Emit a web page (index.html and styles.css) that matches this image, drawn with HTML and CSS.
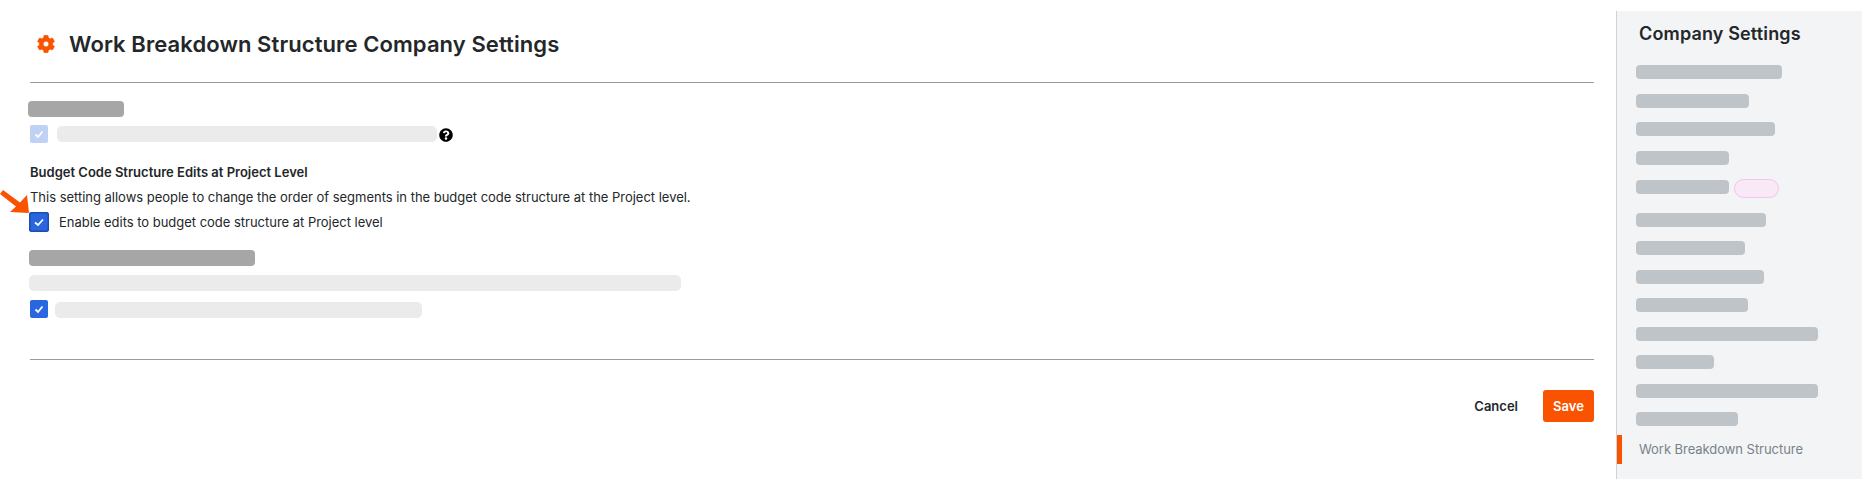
FILE: index.html
```html
<!DOCTYPE html>
<html lang="en">
<head>
    <meta charset="UTF-8">
    <meta name="viewport" content="width=device-width, initial-scale=1.0">
    <title>Work Breakdown Structure Company Settings</title>
    <link rel="stylesheet" href="styles.css">
</head>
<body>
    <main class="content">
        <header class="page-header">
            <svg class="gear-icon" viewBox="0 0 512 512"><path d="M487.4 315.7l-42.6-24.6c4.3-23.2 4.3-47 0-70.2l42.6-24.6c4.9-2.8 7.1-8.6 5.5-14-11.1-35.6-30-67.8-54.7-94.6-3.8-4.1-10-5.1-14.8-2.3L380.8 110c-17.9-15.4-38.5-27.3-60.8-35.1V25.8c0-5.6-3.9-10.5-9.4-11.7-36.7-8.2-74.3-7.8-109.2 0-5.5 1.2-9.4 6.1-9.4 11.7V75c-22.2 7.9-42.8 19.8-60.8 35.1L88.7 85.5c-4.9-2.8-11-1.9-14.8 2.3-24.7 26.7-43.6 58.9-54.7 94.6-1.7 5.4.6 11.2 5.5 14L67.3 221c-4.3 23.2-4.3 47 0 70.2l-42.6 24.6c-4.9 2.8-7.1 8.6-5.5 14 11.1 35.6 30 67.8 54.7 94.6 3.8 4.1 10 5.1 14.8 2.3l42.6-24.6c17.9 15.4 38.5 27.3 60.8 35.1v49.2c0 5.6 3.9 10.5 9.4 11.7 36.7 8.2 74.3 7.8 109.2 0 5.5-1.2 9.4-6.1 9.4-11.7v-49.2c22.2-7.9 42.8-19.8 60.8-35.1l42.6 24.6c4.9 2.8 11 1.9 14.8-2.3 24.7-26.7 43.6-58.9 54.7-94.6 1.5-5.5-.7-11.3-5.6-14.1zM256 336c-44.1 0-80-35.9-80-80s35.9-80 80-80 80 35.9 80 80-35.9 80-80 80z"/></svg>
            <h1>Work Breakdown Structure Company Settings</h1>
        </header>

        <div class="redacted-heading heading-short"></div>
        <div class="check-row check-row-first">
            <span class="checkbox checkbox-faded"><svg viewBox="0 0 18 18"><polyline points="5.5,9.5 8,12 12.5,6.5"/></svg></span>
            <div class="redacted-line line-first"></div>
            <svg class="help-icon" viewBox="0 0 512 512"><path d="M504 256c0 136.997-111.043 248-248 248S8 392.997 8 256C8 119.083 119.043 8 256 8s248 111.083 248 248zM262.655 90c-54.497 0-89.255 22.957-116.549 63.758-3.536 5.286-2.353 12.415 2.715 16.258l34.699 26.31c5.205 3.947 12.621 3.008 16.665-2.122 17.864-22.658 30.113-35.797 57.303-35.797 20.429 0 45.698 13.148 45.698 32.958 0 14.976-12.363 22.667-32.534 33.976C247.128 238.528 216 254.941 216 296v4c0 6.627 5.373 12 12 12h56c6.627 0 12-5.373 12-12v-1.333c0-28.462 83.186-29.647 83.186-106.667 0-58.002-60.165-102-116.531-102zM256 338c-25.365 0-46 20.635-46 46 0 25.364 20.635 46 46 46s46-20.636 46-46c0-25.365-20.635-46-46-46z"/></svg>
        </div>

        <h2 class="setting-title">Budget Code Structure Edits at Project Level</h2>
        <p class="setting-text">This setting allows people to change the order of segments in the budget code structure at the Project level.</p>
        <label class="check-row check-row-main">
            <span class="checkbox checkbox-main"><svg viewBox="0 0 20 20"><polyline points="6,10.5 9,13 14,7.5"/></svg></span>
            <span>Enable edits to budget code structure at Project level</span>
        </label>

        <div class="redacted-heading heading-long"></div>
        <div class="redacted-line line-wide"></div>
        <div class="check-row check-row-last">
            <span class="checkbox"><svg viewBox="0 0 18 18"><polyline points="5.5,9.5 8,12 12.5,6.5"/></svg></span>
            <div class="redacted-line line-last"></div>
        </div>

        <footer class="page-footer">
            <button class="btn-cancel" type="button">Cancel</button>
            <button class="btn-save" type="button">Save</button>
        </footer>

        <svg class="callout-arrow" viewBox="0 0 32 28"><polygon points="29,23 10,22 16,16.5 0,4 3,0 20,12.5 27,5"/></svg>
    </main>

    <aside class="sidebar">
        <h2>Company Settings</h2>
        <ul class="nav-list">
            <li class="nav-bar bar-146"></li>
            <li class="nav-bar bar-113"></li>
            <li class="nav-bar bar-139"></li>
            <li class="nav-bar bar-93"></li>
            <li class="nav-row">
                <div class="nav-bar bar-93"></div>
                <div class="nav-badge"></div>
            </li>
            <li class="nav-bar bar-130"></li>
            <li class="nav-bar bar-109"></li>
            <li class="nav-bar bar-128"></li>
            <li class="nav-bar bar-112"></li>
            <li class="nav-bar bar-182"></li>
            <li class="nav-bar bar-78"></li>
            <li class="nav-bar bar-182"></li>
            <li class="nav-bar bar-102"></li>
            <li class="nav-active">Work Breakdown Structure</li>
        </ul>
    </aside>
</body>
</html>
```

FILE: styles.css
```css
* {
    box-sizing: border-box;
}
body {
    font-family: Inter, 'Liberation Sans', sans-serif;
    background-color: #fff;
    color: #232729;
    margin: 0;
    height: 489px;
    overflow: hidden;
    display: flex;
}
h1, h2, p, ul {
    margin: 0;
    padding: 0;
}
.content {
    width: 1616px;
    padding: 30px 22px 0 30px;
    position: relative;
}
.page-header {
    display: flex;
    align-items: center;
    gap: 14px;
    height: 53px;
    padding-bottom: 24px;
    padding-left: 7px;
    border-bottom: 1px solid #9a9a9a;
}
.gear-icon {
    width: 18px;
    height: 18px;
    fill: #f95300;
    stroke: #f95300;
    stroke-width: 16;
}
h1 {
    font-size: 22px;
    line-height: 28px;
    font-weight: 600;
    letter-spacing: 0.09px;
}
.redacted-heading {
    height: 16px;
    margin-left: -1px;
    background: #a6a6a6;
    border-radius: 4px;
}
.heading-short {
    width: 96px;
    margin-top: 18px;
    margin-left: -2px;
}
.heading-long {
    width: 226px;
    margin-top: 18px;
}
.redacted-line {
    height: 16px;
    background: #ebebeb;
    border-radius: 5px;
}
.line-first {
    width: 380px;
}
.line-wide {
    width: 652px;
    margin-top: 9px;
    margin-left: -1px;
}
.line-last {
    width: 367px;
}
.check-row {
    display: flex;
    align-items: center;
}
.check-row-first {
    gap: 9px;
    margin-top: 8px;
}
.check-row-main {
    gap: 10px;
    margin-top: 5px;
    margin-left: -1px;
    font-size: 13px;
    line-height: 20px;
    letter-spacing: -0.02px;
}
.check-row-last {
    gap: 7px;
    margin-top: 9px;
    align-items: flex-end;
}
.checkbox {
    flex: none;
    width: 18px;
    height: 18px;
    background: #2a66e0;
    border-radius: 2px;
}
.checkbox svg {
    display: block;
    fill: none;
    stroke: #fff;
    stroke-width: 1.8;
}
.checkbox-faded {
    background: #bfd2f5;
}
.checkbox-main {
    width: 20px;
    height: 20px;
    border-radius: 3px;
    box-shadow: inset 0 0 0 1.5px #1d4eaa;
}
.help-icon {
    width: 14px;
    height: 14px;
    margin-left: -7px;
    margin-top: 2px;
}
.setting-title {
    margin-top: 19px;
    font-size: 13px;
    line-height: 20px;
    font-weight: 600;
}
.setting-text {
    margin-top: 5px;
    font-size: 13px;
    line-height: 20px;
    letter-spacing: -0.02px;
}
.page-footer {
    display: flex;
    justify-content: flex-end;
    align-items: center;
    gap: 25px;
    margin-top: 41px;
    padding-top: 30px;
    border-top: 1px solid #9a9a9a;
}
button {
    font-family: inherit;
    font-size: 13px;
    font-weight: 600;
    border: none;
    padding: 0;
    background: none;
    cursor: pointer;
}
.btn-cancel {
    color: #232729;
}
.btn-save {
    width: 51px;
    height: 32px;
    background: #f95300;
    color: #fff;
    border-radius: 3px;
}
.callout-arrow {
    position: absolute;
    left: 0;
    top: 190px;
    width: 32px;
    height: 28px;
    fill: #f95300;
}
.sidebar {
    width: 246px;
    height: 468px;
    margin-top: 11px;
    padding: 11px 0 0 19px;
    background: #f3f4f6;
    border-left: 1px solid #cdd4d8;
}
.sidebar h2 {
    padding-left: 3px;
    font-size: 18px;
    line-height: 24px;
    font-weight: 600;
    letter-spacing: 0.15px;
}
.nav-list {
    list-style: none;
    display: flex;
    flex-direction: column;
    gap: 14.5px;
    margin-top: 19px;
}
.nav-bar {
    height: 14px;
    background: #bfc4c8;
    border-radius: 4px;
}
.nav-row {
    display: flex;
    gap: 5px;
    height: 19px;
    padding-top: 1px;
}
.nav-badge {
    width: 45px;
    height: 19px;
    margin-top: -1px;
    background: #f9e9f7;
    border: 1px solid #f3c6ea;
    border-radius: 10px;
}
.bar-78 { width: 78px; }
.bar-93 { width: 93px; }
.bar-102 { width: 102px; }
.bar-109 { width: 109px; }
.bar-112 { width: 112px; }
.bar-113 { width: 113px; }
.bar-128 { width: 128px; }
.bar-130 { width: 130px; }
.bar-139 { width: 139px; }
.bar-146 { width: 146px; }
.bar-182 { width: 182px; }
.nav-active {
    position: relative;
    margin-top: 1.5px;
    padding-left: 3px;
    font-size: 13px;
    line-height: 14px;
    color: #75838a;
    letter-spacing: -0.05px;
}
.nav-active::before {
    content: "";
    position: absolute;
    left: -19px;
    top: -7px;
    width: 5px;
    height: 29px;
    background: #f95300;
}
```
